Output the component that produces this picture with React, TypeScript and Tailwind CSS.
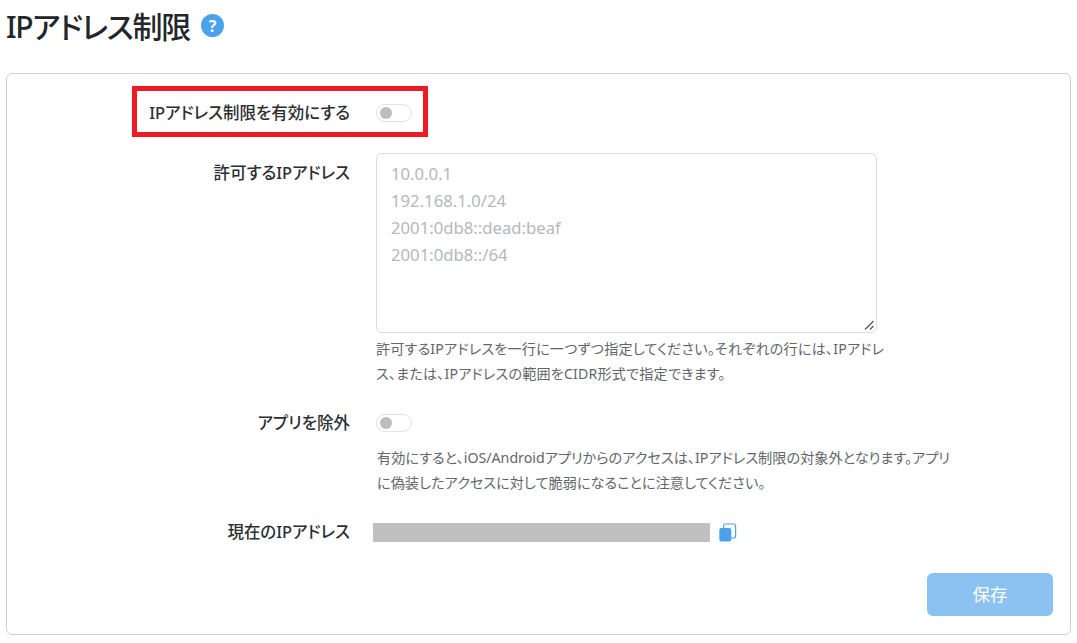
const font = { fontFamily: '"Noto Sans", "Noto Sans CJK JP", sans-serif' };

function Toggle() {
  return (
    <div className="w-[36px] h-[18px] rounded-full border border-[#e2e2e6] bg-white flex items-center pl-[3px]">
      <div className="w-[12px] h-[12px] rounded-full bg-[#bdbdbd]" />
    </div>
  );
}

function Row({ label, top, children, className }: { label: string; top?: string; children: React.ReactNode; className?: string }) {
  return (
    <div className={`flex ${className ?? ""}`}>
      <div className={`w-[343px] shrink-0 text-right text-[16.5px] leading-[24px] font-medium text-[#2b2f33] [font-feature-settings:'palt'] ${top ?? ""}`}>{label}</div>
      <div className="ml-[26px] min-w-0">{children}</div>
    </div>
  );
}

export default function App() {
  return (
    <div className="w-[1077px] h-[643px] bg-white overflow-hidden px-[6px]" style={font}>
      <div className="h-[73px] flex items-start pt-[6px]">
        <h1 className="text-[30px] leading-[42px] font-medium text-[#22272b] [font-feature-settings:'palt'] tracking-[-1.25px]">IPアドレス制限</h1>
        <div className="ml-[11px] mt-[8px] w-[23px] h-[23px] rounded-full bg-[#4ba1ec] flex items-center justify-center text-white text-[16px] leading-none font-bold">?</div>
      </div>
      <div className="relative h-[562px] border border-[#d0d0d0] rounded-[6px] bg-white">
        <Row label="IPアドレス制限を有効にする" className="pt-[27px] items-center h-[51px] relative">
          <Toggle />
          <div className="absolute left-[125px] top-[12px] w-[296px] h-[51px] border-[5px] border-[#ed1c24]" />
        </Row>
        <Row label="許可するIPアドレス" top="pt-[8px]" className="mt-[28px]">
          <div className="w-[501px] h-[180px] border border-[#dcdce0] rounded-[6px] px-[14px] pt-[6px] text-[16.7px] leading-[27px] text-[#b4b8bc] relative">
            <div>10.0.0.1</div>
            <div>192.168.1.0/24</div>
            <div>2001:0db8::dead:beaf</div>
            <div>2001:0db8::/64</div>
            <svg className="absolute right-[1px] bottom-[1px]" width="11" height="11" viewBox="0 0 11 11" fill="none" stroke="#555" strokeWidth="1.2">
              <path d="M1 9.5 9.5 1M6 9.5 9.5 6" />
            </svg>
          </div>
          <p className="w-[510px] mt-[3px] text-[14.1px] tracking-[0.2px] leading-[25px] text-[#62666a] [font-feature-settings:'palt'] [word-break:break-all]">
            許可するIPアドレスを一行に一つずつ指定してください。それぞれの行には、IPアドレ<br />ス、または、IPアドレスの範囲をCIDR形式で指定できます。
          </p>
        </Row>
        <Row label="アプリを除外" className="mt-[25px] h-[24px] items-center">
          <Toggle />
        </Row>
        <div className="flex mt-[10px]">
          <div className="w-[370px] shrink-0" />
          <p className="w-[578px] text-[14.2px] leading-[25px] text-[#62666a] [font-feature-settings:'palt'] [word-break:break-all]">
            有効にすると、iOS/Androidアプリからのアクセスは、IPアドレス制限の対象外となります。アプリに偽装したアクセスに対して脆弱になることに注意してください。
          </p>
        </div>
        <div className="flex items-center mt-[25px] h-[24px]">
          <div className="w-[343px] shrink-0 text-right text-[16.5px] leading-[24px] font-medium text-[#2b2f33] [font-feature-settings:'palt']">現在のIPアドレス</div>
          <div className="ml-[23px] w-[337px] h-[19px] bg-[#c0c0c0]" />
          <svg className="ml-[8px]" width="19" height="19" viewBox="0 0 19 19" fill="none">
            <rect x="5.6" y="1" width="12" height="14" rx="2" stroke="#4ba1ec" strokeWidth="1.2" fill="white" />
            <rect x="1.3" y="5" width="12" height="13.5" rx="2" fill="#4ba1ec" />
          </svg>
        </div>
        <div className="flex justify-end pr-[17px] mt-[29px]">
          <button className="w-[126px] h-[43px] rounded-[6px] bg-[#8cc2f2] text-white text-[17.5px]">保存</button>
        </div>
      </div>
    </div>
  );
}
